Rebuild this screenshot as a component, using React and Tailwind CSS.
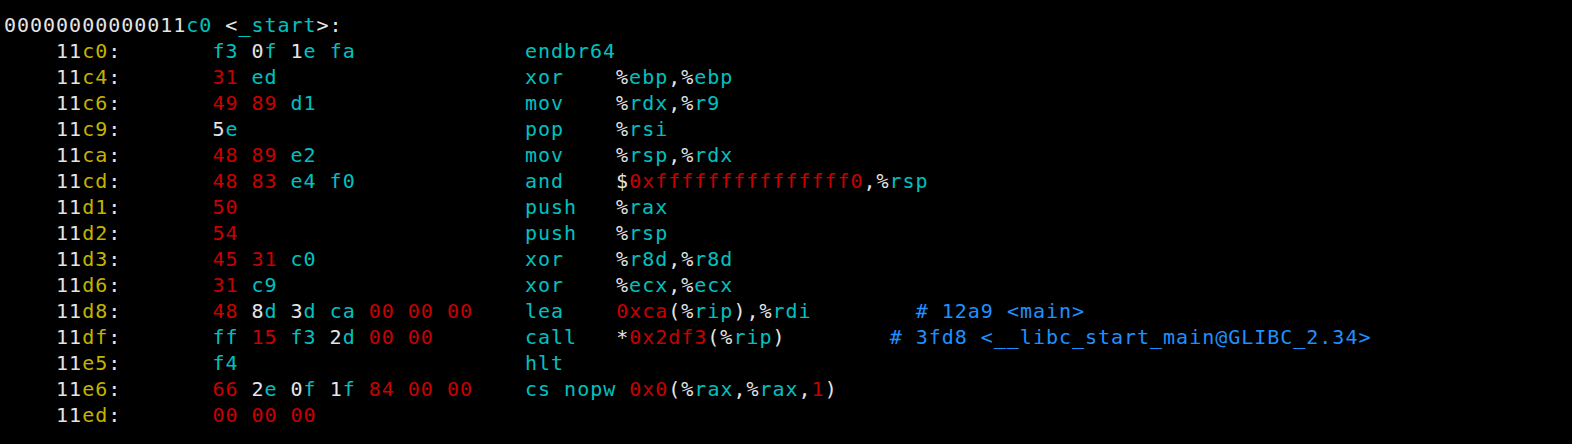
import React from 'react';

const W = 'text-[#e5e5e5]';
const C = 'text-[#00c0c0]';
const R = 'text-[#c80000]';
const Y = 'text-[#c4b400]';
const B = 'text-[#1e90ff]';

const rows = [
  ['11c0', 'f3 0f 1e fa', 'endbr64'],
  ['11c4', '31 ed', 'xor    %ebp,%ebp'],
  ['11c6', '49 89 d1', 'mov    %rdx,%r9'],
  ['11c9', '5e', 'pop    %rsi'],
  ['11ca', '48 89 e2', 'mov    %rsp,%rdx'],
  ['11cd', '48 83 e4 f0', 'and    $0xfffffffffffffff0,%rsp'],
  ['11d1', '50', 'push   %rax'],
  ['11d2', '54', 'push   %rsp'],
  ['11d3', '45 31 c0', 'xor    %r8d,%r8d'],
  ['11d6', '31 c9', 'xor    %ecx,%ecx'],
  ['11d8', '48 8d 3d ca 00 00 00', 'lea    0xca(%rip),%rdi', '# 12a9 <main>'],
  ['11df', 'ff 15 f3 2d 00 00', 'call   *0x2df3(%rip)', '# 3fd8 <__libc_start_main@GLIBC_2.34>'],
  ['11e5', 'f4', 'hlt'],
  ['11e6', '66 2e 0f 1f 84 00 00', 'cs nopw 0x0(%rax,%rax,1)'],
  ['11ed', '00 00 00'],
];

// colour bytes the way the terminal's highlighter does
const byteParts = (bytes) => {
  const out = [];
  bytes.split(' ').forEach((b, i) => {
    if (i > 0) out.push([' ', W]);
    if (/^\d+$/.test(b)) out.push([b, R]);
    else if (/^\d/.test(b)) {
      out.push([b[0], W]);
      out.push([b.slice(1), C]);
    } else out.push([b, C]);
  });
  return out;
};

const insnParts = (text) => {
  const out = [];
  const re = /0x[0-9a-f]+|\d+|[a-z_][a-z0-9_]*|\s+|[^a-z0-9_\s]+/gi;
  let m;
  while ((m = re.exec(text))) {
    const t = m[0];
    if (/^(0x|\d)/i.test(t)) out.push([t, R]);
    else if (/^[a-z_]/i.test(t)) out.push([t, C]);
    else out.push([t, W]);
  }
  return out;
};

const Line = ({ parts }) => (
  <div className="whitespace-pre h-[26px]">
    {parts.map(([t, cls], i) => (
      <span key={i} className={cls}>{t}</span>
    ))}
  </div>
);

export default function App() {
  const lines = [
    [['00000000000011', W], ['c0', C], [' <', W], ['_start', C], ['>:', W]],
  ];

  rows.forEach(([addr, bytes, insn, comment]) => {
    const parts = [
      ['    ' + addr.slice(0, 2), W],
      [addr.slice(2), Y],
      [':', W],
      ['       ', W],
      ...byteParts(bytes),
    ];
    if (insn) {
      parts.push([' '.repeat(24 - bytes.length), W]);
      parts.push(...insnParts(insn));
    }
    if (comment) {
      parts.push(['        ', W]);
      parts.push([comment, B]);
    }
    lines.push(parts);
  });

  return (
    <div className="w-[1572px] h-[444px] bg-black overflow-hidden pl-[4px] pt-[12px] font-['DejaVu_Sans_Mono',monospace] text-[20px] leading-[26px] tracking-[0.98px]">
      {lines.map((parts, i) => (
        <Line key={i} parts={parts} />
      ))}
    </div>
  );
}
